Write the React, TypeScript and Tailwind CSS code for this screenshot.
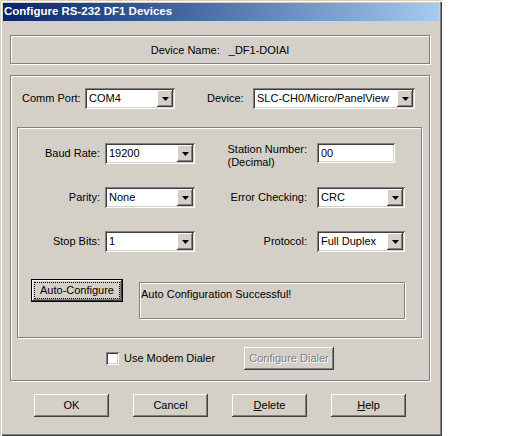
import React from "react";

// Win2k style bevels
const sunken =
  "bg-white shadow-[inset_1px_1px_#808080,inset_-1px_-1px_#ffffff,inset_2px_2px_#404040,inset_-2px_-2px_#d4d0c8]";
const raised =
  "bg-[#d4d0c8] shadow-[inset_-1px_-1px_#404040,inset_1px_1px_#ffffff,inset_-2px_-2px_#808080,inset_2px_2px_#d4d0c8]";
const etched = "border border-[#808080] shadow-[inset_1px_1px_#ffffff,1px_1px_#ffffff]";

function Arrow() {
  return (
    <svg width="7" height="4" viewBox="0 0 7 4">
      <polygon points="0,0 7,0 3.5,4" fill="#000" />
    </svg>
  );
}

function Combo({ value, className }: { value: string; className: string }) {
  return (
    <div className={`flex h-[21px] items-center p-[2px] ${sunken} ${className}`}>
      <span className="flex-1 pl-[2px] leading-none truncate">{value}</span>
      <div className={`flex h-[17px] w-[16px] items-center justify-center ${raised}`}>
        <Arrow />
      </div>
    </div>
  );
}

function Button({ children, disabled }: { children: React.ReactNode; disabled?: boolean }) {
  return (
    <div
      className={cn(
        "flex h-[23px] w-[75px] items-center justify-center",
        raised,
        disabled && "text-[#808080] [text-shadow:1px_1px_0_#ffffff]"
      )}
    >
      {children}
    </div>
  );
}

function cn(...c: (string | false | undefined)[]) {
  return c.filter(Boolean).join(" ");
}

export default function App() {
  return (
    <div className="flex h-[436px] w-[512px] bg-white font-['Liberation_Sans',Arial,sans-serif] text-[11px] text-black">
      {/* Window */}
      <div className="flex h-[436px] w-[442px] flex-col bg-[#d4d0c8] p-[3px] shadow-[inset_1px_1px_#d4d0c8,inset_2px_2px_#ffffff,inset_-1px_-1px_#404040,inset_-2px_-2px_#808080]">
        {/* Title bar */}
        <div className="flex h-[18px] items-center bg-gradient-to-r from-[#0a246a] to-[#a6caf0] pl-[1px] text-[11.5px] font-bold text-white">
          Configure RS-232 DF1 Devices
        </div>

        <div className="flex flex-col pl-[7px]">
          {/* Device name */}
          <div className={`mt-[14px] flex h-[29px] w-[420px] items-center justify-center pt-[1px] ${etched}`}>
            <span>Device Name:</span>
            <span className="ml-[9px]">_DF1-DOIAI</span>
          </div>

          {/* Main group */}
          <div className={`mt-[11px] flex h-[306px] w-[420px] flex-col ${etched}`}>
            <div className="mt-[12px] flex items-center pl-[11px]">
              <span className="w-[63px]">Comm Port:</span>
              <Combo value="COM4" className="w-[90px]" />
              <span className="ml-[32px] w-[46px]">Device:</span>
              <Combo value="SLC-CH0/Micro/PanelView" className="w-[162px]" />
            </div>

            {/* Port settings */}
            <div className={`ml-[6px] mt-[18px] flex h-[211px] w-[405px] flex-col ${etched}`}>
              <div className="mt-[15px] flex h-[21px] items-start">
                <span className="flex h-[21px] w-[87px] items-center justify-end pr-[5px]">Baud Rate:</span>
                <Combo value="19200" className="w-[90px]" />
                <div className="flex w-[122px] justify-end pr-[10px]">
                  <div className="leading-[13px]">
                    <div>Station Number:</div>
                    <div>(Decimal)</div>
                  </div>
                </div>
                <div className={`flex h-[20px] w-[78px] items-center pl-[4px] ${sunken}`}>00</div>
              </div>

              <div className="mt-[23px] flex items-center">
                <span className="w-[87px] pr-[5px] text-right">Parity:</span>
                <Combo value="None" className="w-[90px]" />
                <span className="w-[122px] pr-[10px] text-right">Error Checking:</span>
                <Combo value="CRC" className="w-[88px]" />
              </div>

              <div className="mt-[23px] flex items-center">
                <span className="w-[87px] pr-[5px] text-right">Stop Bits:</span>
                <Combo value="1" className="w-[90px]" />
                <span className="w-[122px] pr-[10px] text-right">Protocol:</span>
                <Combo value="Full Duplex" className="w-[88px]" />
              </div>

              {/* Auto configure */}
              <div className="ml-[13px] mt-[27px] flex items-start">
                <div className="h-[23px] w-[92px] border border-black">
                  <div className={`flex h-full w-full p-[2px] ${raised}`}>
                    <span className="flex flex-1 items-center justify-center border border-dotted border-black">
                      Auto-Configure
                    </span>
                  </div>
                </div>
                <div className={`ml-[16px] mt-[3px] h-[37px] w-[266px] pl-[1px] pt-[3px] ${etched}`}>
                  Auto Configuration Successful!
                </div>
              </div>
            </div>

            {/* Modem dialer */}
            <div className="ml-[95px] mt-[9px] flex items-center">
              <div className="flex w-[138px] items-center">
                <div className={`h-[13px] w-[13px] ${sunken}`} />
                <span className="ml-[5px]">Use Modem Dialer</span>
              </div>
              <div className={`flex h-[23px] w-[90px] items-center justify-center ${raised} text-[#808080] [text-shadow:1px_1px_0_#ffffff]`}>
                Configure Dialer
              </div>
            </div>
          </div>
        </div>

        {/* Dialog buttons */}
        <div className="ml-[31px] mt-[13px] flex gap-[24px]">
          <Button>OK</Button>
          <Button>Cancel</Button>
          <Button>
            <span className="underline">D</span>elete
          </Button>
          <Button>
            <span className="underline">H</span>elp
          </Button>
        </div>
      </div>
    </div>
  );
}
